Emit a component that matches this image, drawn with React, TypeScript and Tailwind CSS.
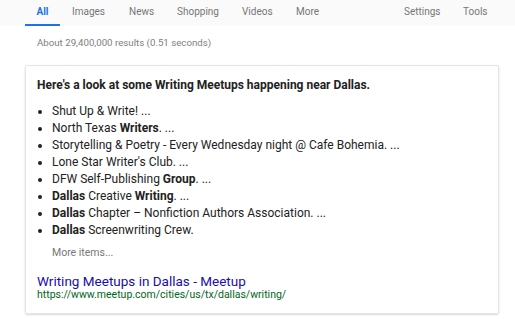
import React from "react";

const tabs = [
  { label: "Images", w: "w-[57px]" },
  { label: "News", w: "w-[48px]" },
  { label: "Shopping", w: "w-[65px]" },
  { label: "Videos", w: "w-[54px]" },
  { label: "More", w: "w-[40px]" },
];

const items: React.ReactNode[] = [
  <>Shut Up &amp; Write! ...</>,
  <>North Texas <b>Writers</b>. ...</>,
  <>Storytelling &amp; Poetry - Every Wednesday night @ Cafe Bohemia. ...</>,
  <>Lone Star Writer's Club. ...</>,
  <>DFW Self-Publishing <b>Group</b>. ...</>,
  <><b>Dallas</b> Creative <b>Writing</b>. ...</>,
  <><b>Dallas</b> Chapter – Nonfiction Authors Association. ...</>,
  <><b>Dallas</b> Screenwriting Crew.</>,
];

export default function App() {
  return (
    <div className="w-[515px] h-[319px] bg-white overflow-hidden font-['Roboto',Arial,sans-serif]">
      <div className="h-[26px] bg-[#fafafa] flex text-[10px] text-[#777] pl-[25px]">
        <div className="w-[35px] flex justify-center pt-[4px] border-b-[2px] border-[#1a73e8] text-[#1a73e8] font-bold">
          All
        </div>
        <div className="ml-[12px] flex">
          {tabs.map((t) => (
            <div key={t.label} className={`${t.w} pt-[4px]`}>
              {t.label}
            </div>
          ))}
        </div>
        <div className="ml-[68px] flex pt-[4px]">
          <span className="w-[59px]">Settings</span>
          <span>Tools</span>
        </div>
      </div>
      <div className="pl-[37px] pt-[10px] text-[9.7px] text-[#808080]">About 29,400,000 results (0.51 seconds)</div>
      <div className="mt-[14px] ml-[25px] w-[474px] h-[249px] border border-[#e4e4e4] rounded-[2px] shadow-[0_1px_2px_rgba(0,0,0,0.15)] pl-[11px] pt-[10px]">
        <div className="text-[12px] font-bold text-[#222]">Here's a look at some Writing Meetups happening near Dallas.</div>
        <ul className="mt-[9px] list-disc pl-[15px] text-[12px] leading-[17.1px] text-[#222]">
          {items.map((it, i) => (
            <li key={i}>{it}</li>
          ))}
        </ul>
        <div className="pl-[15px] mt-[6px] text-[10.5px] text-[#777]">More items...</div>
        <div className="mt-[12px] text-[13.5px] leading-[16px] text-[#1a0dab]">Writing Meetups in Dallas - Meetup</div>
        <div className="text-[10.5px] leading-[11px] text-[#006621]">https://www.meetup.com/cities/us/tx/dallas/writing/</div>
      </div>
    </div>
  );
}
